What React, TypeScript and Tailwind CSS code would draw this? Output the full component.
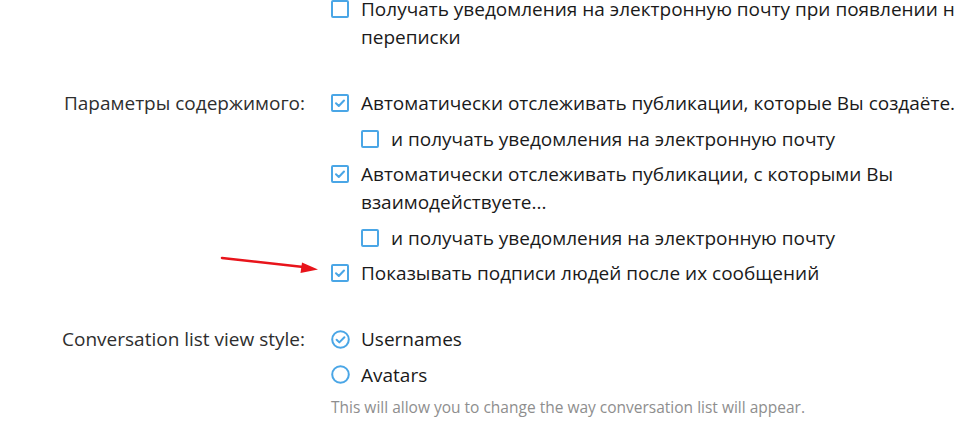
import React from 'react';

const BLUE = '#4aa6e6';

const CheckBox: React.FC<{ checked?: boolean }> = ({ checked }) => (
  <svg width="18" height="18" viewBox="0 0 18 18" className="shrink-0">
    <rect x="1" y="1" width="16" height="16" rx="1" fill="white" stroke={BLUE} strokeWidth="2" />
    {checked && <path d="M5 9.2 L7.8 12 L13 6.5" fill="none" stroke={BLUE} strokeWidth="2" strokeLinecap="round" strokeLinejoin="round" />}
  </svg>
);

const Radio: React.FC<{ checked?: boolean }> = ({ checked }) => (
  <svg width="19" height="19" viewBox="0 0 19 19" className="shrink-0 mr-[-1px]">
    <circle cx="9.5" cy="9.5" r="8.3" fill="white" stroke={BLUE} strokeWidth="2" />
    {checked && <path d="M5.6 9.8 L8.3 12.4 L13.4 7.2" fill="none" stroke={BLUE} strokeWidth="2" strokeLinecap="round" strokeLinejoin="round" />}
  </svg>
);

const Option: React.FC<{ checked?: boolean; radio?: boolean; children: React.ReactNode }> = ({ checked, radio, children }) => (
  <div className="flex items-start gap-[12px]">
    <div className="h-[28px] flex items-center">{radio ? <Radio checked={checked} /> : <CheckBox checked={checked} />}</div>
    <div className="leading-[28px] whitespace-nowrap">{children}</div>
  </div>
);

const Row: React.FC<{ label?: string; children: React.ReactNode; className?: string }> = ({ label, children, className }) => (
  <div className={`flex ${className ?? ''}`}>
    <div className="w-[305px] shrink-0 text-right text-[#2e2e2e] leading-[28px]">{label}</div>
    <div className="ml-[26px] flex flex-col gap-[7.6px]">{children}</div>
  </div>
);

export default function App() {
  return (
    <div
      className="relative w-[954px] h-[427px] overflow-hidden bg-white text-[19px] text-[#1a1a1a]"
      style={{ fontFamily: '"Open Sans", "Noto Sans", sans-serif' }}
    >
      <div className="-mt-[5px] flex flex-col">
        <Row>
          <Option>
            Получать уведомления на электронную почту при появлении новой
            <br />
            переписки
          </Option>
        </Row>

        <Row label="Параметры содержимого:" className="mt-[38px]">
          <Option checked>Автоматически отслеживать публикации, которые Вы создаёте.</Option>
          <div className="pl-[30px]">
            <Option>и получать уведомления на электронную почту</Option>
          </div>
          <Option checked>
            Автоматически отслеживать публикации, с которыми Вы
            <br />
            взаимодействуете...
          </Option>
          <div className="pl-[30px]">
            <Option>и получать уведомления на электронную почту</Option>
          </div>
          <Option checked>Показывать подписи людей после их сообщений</Option>
        </Row>

        <Row label="Conversation list view style:" className="mt-[38px]">
          <Option radio checked>Usernames</Option>
          <Option radio>Avatars</Option>
          <div className="text-[15.5px] text-[#8e8e8e] leading-[22px] -mt-[1px]">
            This will allow you to change the way conversation list will appear.
          </div>
        </Row>
      </div>

      <svg className="absolute left-[218px] top-[252px]" width="106" height="24" viewBox="0 0 106 24">
        <line x1="4" y1="6" x2="90" y2="15.5" stroke="#e8141b" strokeWidth="2.5" strokeLinecap="round" />
        <path d="M100 17.5 L84 10.5 L82.5 21 Z" fill="#e8141b" />
      </svg>
    </div>
  );
}
